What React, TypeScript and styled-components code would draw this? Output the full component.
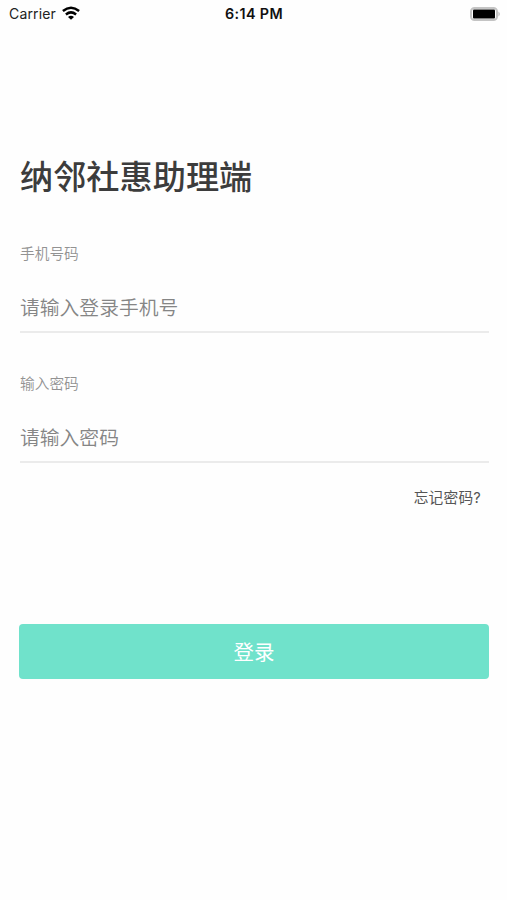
import React from "react";
import styled, { createGlobalStyle } from "styled-components";

const Global = createGlobalStyle`
  * { box-sizing: border-box; }
  body { margin: 0; background: #fefefe; font-family: Inter, "Noto Sans CJK SC", sans-serif; }
`;
const Screen = styled.main`
  width: 507px; height: 900px; overflow: hidden; background: #fefefe;
`;
const StatusBar = styled.header`
  height: 27px; padding: 0 6px 0 9px; display: grid; grid-template-columns: 1fr auto 1fr; align-items: center;
  font-size: 14px; color: #111;
`;
const Carrier = styled.div`
  display: flex; align-items: center; gap: 6px; letter-spacing: 0.15px; color: #222;
`;
const Time = styled.time`
  font-weight: 600; font-size: 14.3px; letter-spacing: 0.4px; margin-right: 2px;
`;
const Battery = styled.svg`
  justify-self: end; display: block;
`;
const Form = styled.form`
  padding: 128px 18px 0 20px; display: flex; flex-direction: column;
`;
const Title = styled.h1`
  margin: 0; height: 44px; line-height: 44px; font-size: 33.2px; font-weight: 500; color: #3c3c3c; white-space: nowrap;
`;
const Field = styled.label<{ $top: number }>`
  display: flex; flex-direction: column; margin-top: ${(p) => p.$top}px; height: 90px; border-bottom: 2px solid #ebebeb;
`;
const Caption = styled.span`
  height: 22px; line-height: 22px; font-size: 14.7px; font-weight: 350; color: #929292;
`;
const Input = styled.input`
  margin: 28px 0 0; padding: 0; height: 30px; border: 0; outline: 0; background: transparent; font: 350 19.8px/30px Inter, "Noto Sans CJK SC", sans-serif;
  &::placeholder { color: #858585; opacity: 1; }
`;
const Forgot = styled.a`
  align-self: flex-end; margin: 24px 8px 0 0; height: 22px; line-height: 22px; font-size: 14.7px; font-weight: 400; letter-spacing: 0.2px; color: #555;
`;
const Submit = styled.button`
  margin: 115px 0 0 -1px; width: 470px; height: 55px; border: 0; padding: 2px 0 0; border-radius: 4px; background: #70e2cb; color: #fff;
  font: 20.5px/53px Inter, "Noto Sans CJK SC", sans-serif;
`;

export default function App() {
  return (
    <Screen>
      <Global />
      <StatusBar>
        <Carrier>
          Carrier
          <svg width="18" height="15" viewBox="0 0 18 15" fill="none" stroke="#000" strokeWidth="2.5">
            <path d="M.9 5Q9-1.6 17.1 5M3.9 8.4Q9 4.4 14.1 8.4" />
            <path d="M9 13.8L6 11Q9 8.7 12 11Z" fill="#000" stroke="none" />
          </svg>
        </Carrier>
        <Time>6:14 PM</Time>
        <Battery width="31" height="14" viewBox="0 0 31 14">
          <rect x="1" y="1" width="26" height="12" rx="3.5" fill="none" stroke="#c4c4c4" strokeWidth="2" />
          <rect x="3" y="2.5" width="22" height="9" rx="1" />
          <path d="M28.5 4.5Q31 7 28.5 9.5Z" fill="#b4b4b4" />
        </Battery>
      </StatusBar>
      <Form onSubmit={(e) => e.preventDefault()}>
        <Title>纳邻社惠助理端</Title>
        <Field $top={44}>
          <Caption>手机号码</Caption>
          <Input type="tel" placeholder="请输入登录手机号" />
        </Field>
        <Field $top={40}>
          <Caption>输入密码</Caption>
          <Input type="password" placeholder="请输入密码" />
        </Field>
        <Forgot>忘记密码?</Forgot>
        <Submit>登录</Submit>
      </Form>
    </Screen>
  );
}
